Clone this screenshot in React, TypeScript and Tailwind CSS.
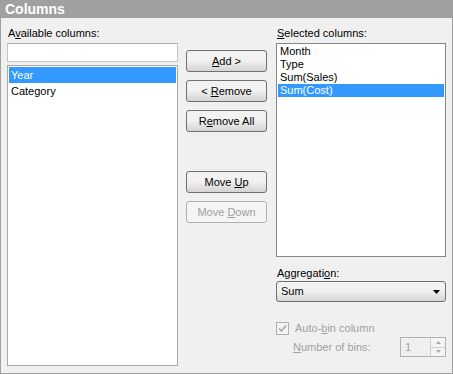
import React from "react";

const font = { fontFamily: '"Liberation Sans", Arial, sans-serif' };

function Btn({ children, disabled }: { children: React.ReactNode; disabled?: boolean }) {
  return (
    <div
      className={
        "h-[22px] w-[81px] rounded-[3px] border flex items-center justify-center text-[11px] " +
        (disabled
          ? "border-[#adb2b5] bg-[#f4f4f4] text-[#a0a0a0]"
          : "border-[#707070] bg-linear-to-b from-[#f2f2f2] from-45% to-[#d4d4d4] text-black")
      }
    >
      <span>{children}</span>
    </div>
  );
}

const U = ({ children }: { children: React.ReactNode }) => <span className="underline underline-offset-[1px]">{children}</span>;

export default function App() {
  return (
    <div style={font} className="w-[453px] h-[374px] border border-[#a0a0a0] bg-[#f0f0f0] flex flex-col text-[11px] leading-[13px] text-black">
      <div className="h-[18px] bg-[#a0a0a0] flex items-center pl-[5px] text-white font-bold text-[14px] -mx-px -mt-px pt-px">
        Columns
      </div>
      <div className="flex flex-row flex-1 pl-[6px]">
        {/* Left column */}
        <div className="w-[171px] pt-[9px] flex flex-col">
          <div className="h-[13px] pl-[1px]">
            A<U>v</U>ailable columns:
          </div>
          <div className="mt-[3px] h-[19px] border border-[#c4c4c4] border-t-[#abadb3] bg-white" />
          <div className="mt-[3px] h-[301px] border border-[#a8a8ad] bg-white pt-px px-px">
            <div className="h-[16px] bg-[#3399ff] text-white flex items-center pl-[2px]">Year</div>
            <div className="h-[16px] flex items-center pl-[2px]">Category</div>
          </div>
        </div>
        {/* Middle column */}
        <div className="ml-[8px] pt-[32px] flex flex-col">
          <Btn>
            <U>A</U>dd &gt;
          </Btn>
          <div className="mt-[8px]">
            <Btn>
              &lt; <U>R</U>emove
            </Btn>
          </div>
          <div className="mt-[8px]">
            <Btn>
              R<U>e</U>move All
            </Btn>
          </div>
          <div className="mt-[39px]">
            <Btn>
              Move <U>U</U>p
            </Btn>
          </div>
          <div className="mt-[8px]">
            <Btn disabled>
              Move <U>D</U>own
            </Btn>
          </div>
        </div>
        {/* Right column */}
        <div className="ml-[9px] w-[170px] pt-[9px] flex flex-col">
          <div className="h-[13px] pl-[1px]">
            <U>S</U>elected columns:
          </div>
          <div className="mt-[3px] h-[214px] border border-[#828790] bg-white pt-px px-px">
            <div className="h-[13px] flex items-center pl-[2px]">Month</div>
            <div className="h-[13px] flex items-center pl-[2px]">Type</div>
            <div className="h-[13px] flex items-center pl-[2px]">Sum(Sales)</div>
            <div className="h-[13px] bg-[#3399ff] text-white flex items-center pl-[2px]">Sum(Cost)</div>
          </div>
          <div className="mt-[10px] h-[13px] pl-[1px]">
            Aggregati<U>o</U>n:
          </div>
          <div className="mt-[1px] h-[21px] rounded-[3px] border border-[#707070] bg-linear-to-b from-[#f2f2f2] from-45% to-[#d6d6d6] flex items-center justify-between pl-[4px] pr-[5px]">
            <span>Sum</span>
            <svg width="7" height="4" viewBox="0 0 7 4">
              <path d="M0 0 H7 L3.5 4 Z" fill="#000" />
            </svg>
          </div>
          <div className="mt-[20px] flex items-center h-[13px] text-[#a0a0a0]">
            <div className="w-[13px] h-[13px] border border-[#b1b1b1] bg-[#f4f4f4] flex items-center justify-center">
              <svg width="9" height="9" viewBox="0 0 9 9">
                <path d="M1 4.5 L3.5 7 L8 1.5" stroke="#a6a6a6" strokeWidth="1.6" fill="none" />
              </svg>
            </div>
            <span className="ml-[6px]">
              Auto-<U>b</U>in column
            </span>
          </div>
          <div className="mt-[2px] flex items-center justify-between h-[20px] pl-[17px] text-[#a0a0a0]">
            <span>
              <U>N</U>umber of bins:
            </span>
            <div className="w-[46px] h-[20px] border border-[#adb2b5] bg-[#f0f0f0] flex items-stretch">
              <div className="flex-1 pl-[4px] flex items-center">1</div>
              <div className="w-[15px] flex flex-col border-l border-[#d0d0d0]">
                <div className="flex-1 flex items-center justify-center border-b border-[#d0d0d0] bg-[#f4f4f4]">
                  <svg width="5" height="3" viewBox="0 0 5 3"><path d="M0 3 H5 L2.5 0 Z" fill="#a8a8a8" /></svg>
                </div>
                <div className="flex-1 flex items-center justify-center bg-[#f4f4f4]">
                  <svg width="5" height="3" viewBox="0 0 5 3"><path d="M0 0 H5 L2.5 3 Z" fill="#a8a8a8" /></svg>
                </div>
              </div>
            </div>
          </div>
        </div>
      </div>
    </div>
  );
}
